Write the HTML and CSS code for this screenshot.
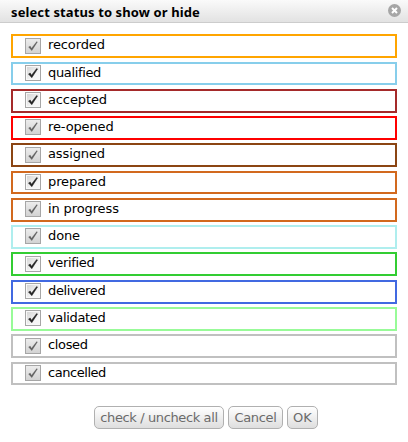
FILE: index.html
```
<!DOCTYPE html>
<html lang="en">
<head>
<meta charset="utf-8">
<title>select status to show or hide</title>
<link rel="stylesheet" href="styles.css">
</head>
<body>
<svg class="defs" width="0" height="0">
  <defs>
    <linearGradient id="face" x1="0" y1="0" x2="1" y2="1"><stop offset="0" stop-color="#d6d6d6"/><stop offset=".7" stop-color="#f6f6f6"/></linearGradient>
    <linearGradient id="softface" x1="0" y1="0" x2="0" y2="1"><stop offset="0" stop-color="#ededed"/><stop offset="1" stop-color="#d2d2d2"/></linearGradient>
    <symbol id="check" viewBox="0 0 16 16">
      <rect x=".5" y=".5" width="15" height="15" fill="#f8f8f8" stroke="#a6a6a6"/>
      <rect x="2" y="2" width="12" height="12" fill="url(#face)"/>
      <path d="M3.5 9 5.2 8 6.5 10.2 11.7 3.5 12.5 4 6.8 12.7Z" fill="currentColor" stroke="currentColor" stroke-width=".5"/>
    </symbol>
    <symbol id="check-soft" viewBox="0 0 16 16">
      <rect x=".5" y=".5" width="15" height="15" fill="url(#softface)" stroke="#a6a6a6"/>
      <path d="M3.5 9 5.2 8 6.5 10.2 11.7 3.5 12.5 4 6.8 12.7Z" fill="currentColor" stroke="currentColor" stroke-width=".2"/>
    </symbol>
  </defs>
</svg>
<header class="titlebar">
  <h1>select status to show or hide</h1>
  <svg class="close" viewBox="0 0 13 13"><circle cx="6.5" cy="6.5" r="6.5" fill="#a6a6a6"/><path d="M4 4 9 9M9 4 4 9" stroke="#fff" stroke-width="2"/></svg>
</header>
<main class="statuses">
  <label class="row recorded soft low"><svg class="box"><use href="#check-soft"/></svg><span>recorded</span></label>
  <label class="row qualified short"><svg class="box"><use href="#check"/></svg><span>qualified</span></label>
  <label class="row accepted"><svg class="box"><use href="#check"/></svg><span>accepted</span></label>
  <label class="row reopened soft"><svg class="box"><use href="#check-soft"/></svg><span>re-opened</span></label>
  <label class="row assigned soft low"><svg class="box"><use href="#check-soft"/></svg><span>assigned</span></label>
  <label class="row prepared short"><svg class="box"><use href="#check"/></svg><span>prepared</span></label>
  <label class="row progress soft"><svg class="box"><use href="#check-soft"/></svg><span>in progress</span></label>
  <label class="row done soft"><svg class="box"><use href="#check-soft"/></svg><span>done</span></label>
  <label class="row verified low"><svg class="box"><use href="#check"/></svg><span>verified</span></label>
  <label class="row delivered"><svg class="box"><use href="#check"/></svg><span>delivered</span></label>
  <label class="row validated"><svg class="box"><use href="#check"/></svg><span>validated</span></label>
  <label class="row closed soft low"><svg class="box"><use href="#check-soft"/></svg><span>closed</span></label>
  <label class="row cancelled short soft"><svg class="box"><use href="#check-soft"/></svg><span>cancelled</span></label>
</main>
<footer class="actions">
  <button class="toggle">check / uncheck all</button>
  <button class="cancel">Cancel</button>
  <button class="ok">OK</button>
</footer>
</body>
</html>
```
FILE: styles.css
```
* { box-sizing: border-box; }
body { margin: 0; background: #fff; color: #000; font: 13px/16px "DejaVu Sans", sans-serif; }
.defs { display: block; height: 0; }
.titlebar { display: flex; align-items: center; justify-content: space-between; height: 23px; padding: 2px 7px 0 11px; border-bottom: 1px solid #ccc; background: linear-gradient(#fafafa, #e2e2e2); }
h1 { margin: 0; font: bold 13px/16px "Noto Sans", sans-serif; letter-spacing: .11px; white-space: nowrap; }
.close { width: 13px; height: 13px; margin-top: -4px; }
.statuses { display: flex; flex-direction: column; padding: 11px 11px 0; }
.row { display: flex; flex: none; height: 24px; margin-bottom: 3px; padding: 1px 12px 0; border: 2px solid; letter-spacing: -.12px; }
.row.short { height: 23px; margin-top: 1px; margin-bottom: 4px; }
.row.delivered { margin-top: 1px; }
.box { width: 16px; height: 16px; margin: 0 7px 0 0; color: #222; }
.low .box { margin-top: 1px; }
.soft .box { color: #626262; }
.row span { color: #000; }
.recorded { border-color: orange; }
.qualified { border-color: skyblue; }
.accepted { border-color: brown; }
.reopened { border-color: red; }
.assigned { border-color: saddlebrown; }
.prepared, .progress { border-color: chocolate; }
.done { border-color: paleturquoise; }
.verified { border-color: limegreen; }
.delivered { border-color: royalblue; }
.validated { border-color: palegreen; }
.closed, .cancelled { border-color: silver; }
.qualified span, .verified span, .delivered span, .validated span, .closed span { letter-spacing: -.35px; }
.cancelled span { letter-spacing: -.45px; }
.actions { display: flex; gap: 4px; padding: 17px 0 0 94px; }
button { height: 23px; padding: 0; border: 1px solid #b0b0b0; border-radius: 5px; background: linear-gradient(#fff, #dedede); color: #6b6b6b; font: 13px/19px "DejaVu Sans", sans-serif; white-space: nowrap; }
.toggle { width: 130px; letter-spacing: -.38px; }
.cancel { width: 55px; letter-spacing: -.35px; }
.ok { width: 31px; }
```
